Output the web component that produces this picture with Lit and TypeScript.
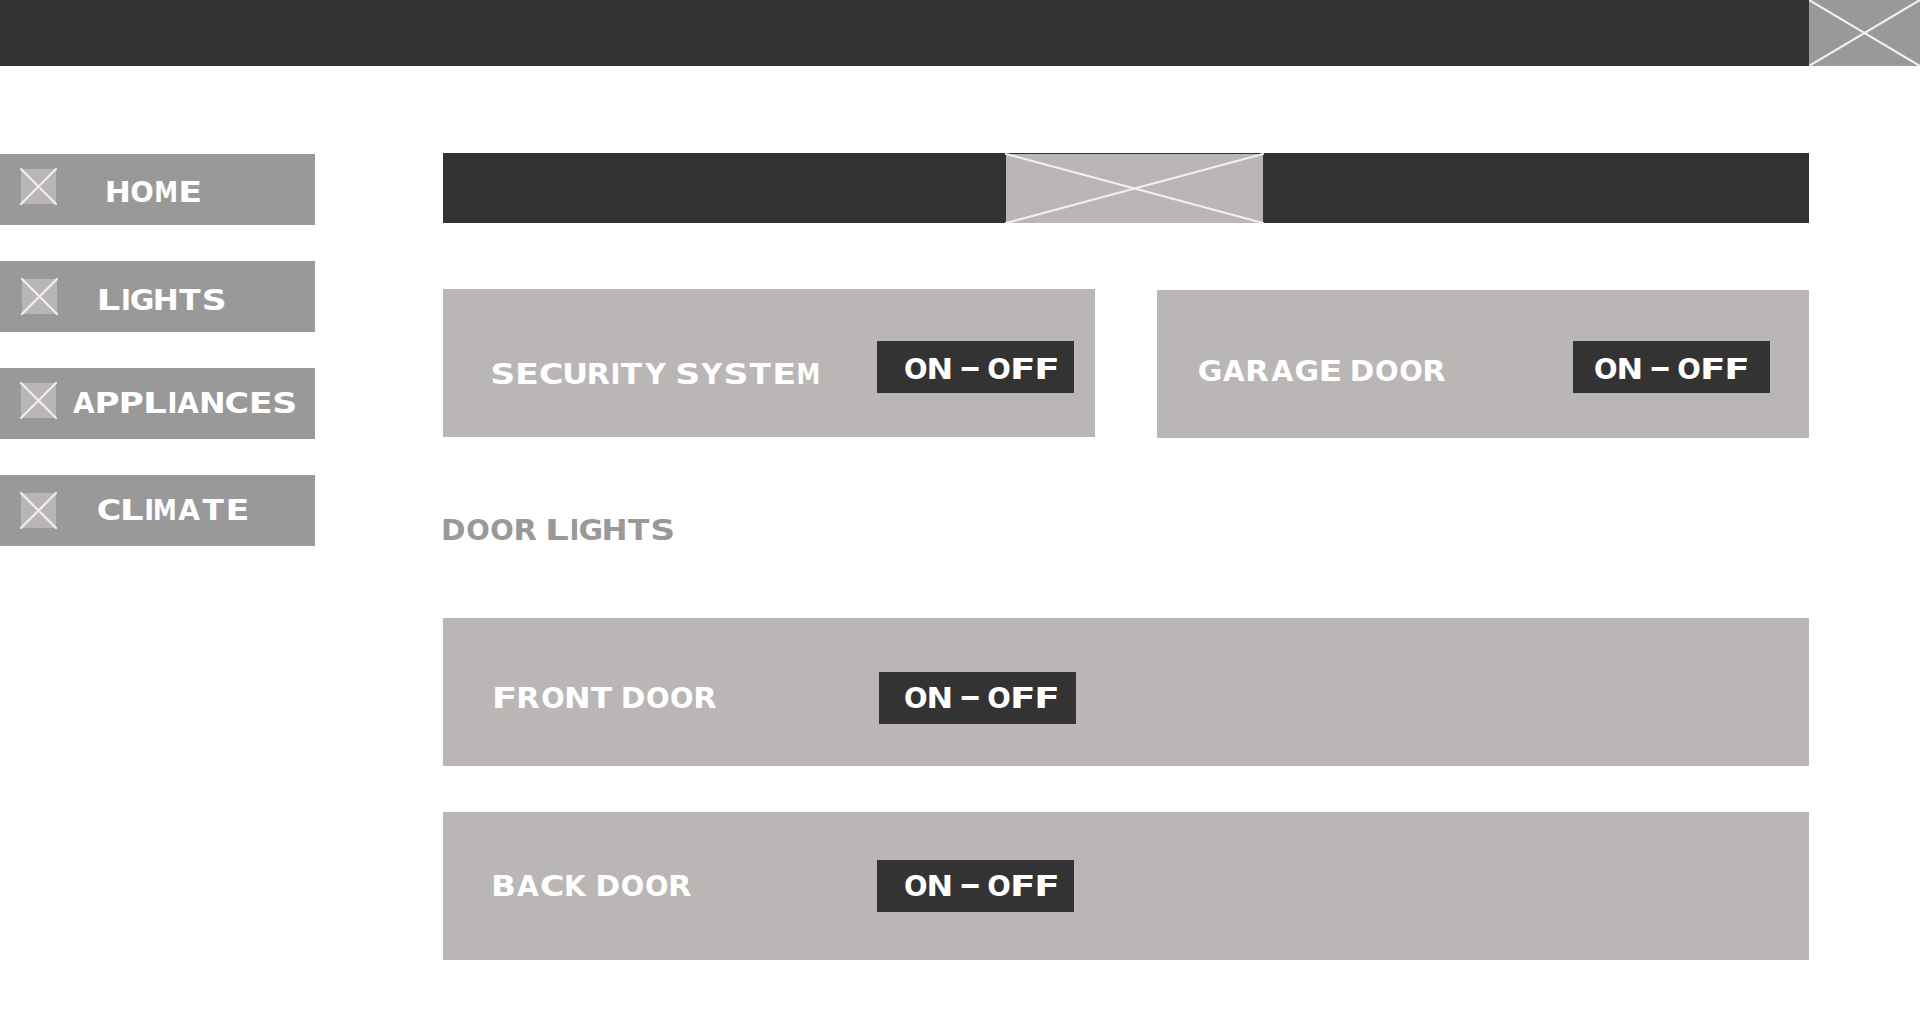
import { LitElement, html, svg, css } from "lit";
import { customElement, property } from "lit/decorators.js";

const CELL = 21;
const STEP = 24.15;
const SIZE = 28.8;

/* Per glyph, in em: advance width, ink width, ink centre minus advance centre. */
const METRICS: Record<string, [number, number, number]> = {
  A: [0.774, 0.75, 0],
  B: [0.762, 0.64, 0.012],
  C: [0.734, 0.631, -0.006],
  D: [0.83, 0.71, 0.018],
  E: [0.683, 0.6, 0],
  F: [0.683, 0.56, 0.01],
  G: [0.821, 0.7, -0.012],
  H: [0.837, 0.675, 0],
  I: [0.372, 0.188, 0],
  K: [0.775, 0.75, 0.05],
  L: [0.637, 0.56, 0.035],
  M: [0.995, 0.88, 0],
  N: [0.837, 0.66, 0],
  O: [0.85, 0.758, 0],
  P: [0.733, 0.615, 0.027],
  R: [0.77, 0.69, 0.035],
  S: [0.72, 0.605, 0],
  T: [0.682, 0.672, 0],
  U: [0.812, 0.65, 0],
  Y: [0.724, 0.74, 0],
  "-": [0.415, 0.31, 0],
};

@customElement("grid-label")
class GridLabel extends LitElement {
  @property() text = "";

  static styles = css`
    :host { display: block; flex: none; height: 21px; }
    .lettering { display: block; height: 21px; overflow: visible; }
    .run {
      font-family: "DejaVu Sans", "Liberation Sans", sans-serif;
      font-weight: 700;
      font-size: 28.8px;
      fill: currentColor;
      white-space: pre;
    }
  `;

  render() {
    let x = 0.3;
    let end = 0;
    const letters = [...this.text].map((ch) => {
      if (ch === " ") {
        const at = x;
        x += 8;
        return svg`<tspan x=${at.toFixed(2)} y="21"> </tspan>`;
      }
      const w = ch === "I" ? 5 : ch === "-" ? 17 : CELL;
      const [advance, ink, shift] = METRICS[ch];
      const scale = w / (ink * SIZE);
      const length = advance * SIZE * scale;
      const at = x + w / 2 - length / 2 - shift * SIZE * scale;
      end = x + w;
      x += ch === "I" ? 7.8 : ch === "-" ? 19 : STEP;
      return svg`<tspan x=${at.toFixed(2)} y=${ch === "-" ? "19" : "21"} textLength=${length.toFixed(2)} lengthAdjust="spacingAndGlyphs">${ch}</tspan>`;
    });
    return html`<svg class="lettering" width=${Math.floor(end)} height="21"><text class="run">${letters}</text></svg>`;
  }
}

@customElement("cross-box")
class CrossBox extends LitElement {
  static styles = css`
    :host { display: block; flex: none; background: #bab6b5; }
    .cross { display: block; width: 100%; height: 100%; overflow: visible; }
    .cross line { stroke: #f1f0ee; stroke-width: 2.2; stroke-linecap: round; }
  `;

  render() {
    return html`<svg class="cross">
      <line x1="0" y1="0" x2="100%" y2="100%"></line>
      <line x1="0" y1="100%" x2="100%" y2="0"></line>
    </svg>`;
  }
}

@customElement("app-root")
class AppRoot extends LitElement {
  static styles = css`
    :host { display: block; height: 1027px; background: #fff; color: #fff; overflow: hidden; }
    .topbar { display: flex; justify-content: flex-end; height: 66px; background: #333; }
    .account { width: 111px; background: #999; overflow: hidden; }
    .body { display: flex; align-items: flex-start; gap: 128px; padding-top: 87px; }
    .menu { display: flex; flex-direction: column; gap: 36px; width: 315px; padding-top: 1px; }
    .item { display: flex; align-items: flex-start; height: 71px; background: #999; box-sizing: border-box; padding-left: 21px; }
    .icon { width: 35px; height: 35px; margin-top: 15px; }
    .low { margin-top: 18px; }
    .lights { margin-left: 1px; }
    .t-home { margin: 27px 0 0 51px; }
    .t-lights { margin: 28px 0 0 42px; }
    .t-appliances { margin: 24px 0 0 17px; }
    .t-climate { margin: 24px 0 0 42px; }
    .main { width: 1366px; }
    .banner { display: flex; height: 70px; background: #333; }
    .picture { width: 257px; height: 69px; margin: 1px 0 0 563px; }
    .pair { display: flex; align-items: flex-start; justify-content: space-between; margin-top: 66px; }
    .card { display: flex; align-items: flex-start; justify-content: space-between; box-sizing: border-box; height: 148px; background: #bab6b5; }
    .half { width: 652px; }
    .security { padding: 52px 21px 0 49px; }
    .t-security { margin-top: 22px; }
    .garage { margin-top: 1px; padding: 51px 39px 0 42px; }
    .t-garage { margin-top: 19px; }
    .toggle { display: flex; flex: none; box-sizing: border-box; width: 197px; height: 52px; background: #333; padding: 17px 0 0 28px; }
    .g-toggle { padding-left: 22px; }
    .heading { color: #999; margin-top: 81px; }
    .front { margin-top: 78px; padding: 54px 733px 0 51px; }
    .front-toggle { padding: 15px 0 0 26px; }
    .t-front { margin-top: 15px; }
    .back { margin-top: 46px; padding: 48px 735px 0 50px; }
    .back-toggle { padding-top: 15px; }
    .t-back { margin-top: 15px; }
  `;

  render() {
    return html`
      <header class="topbar"><cross-box class="account"></cross-box></header>
      <div class="body">
        <nav class="menu">
          <div class="item"><cross-box class="icon"></cross-box><grid-label class="t-home" text="HOME"></grid-label></div>
          <div class="item"><cross-box class="icon low lights"></cross-box><grid-label class="t-lights" text="LIGHTS"></grid-label></div>
          <div class="item"><cross-box class="icon"></cross-box><grid-label class="t-appliances" text="APPLIANCES"></grid-label></div>
          <div class="item"><cross-box class="icon low"></cross-box><grid-label class="t-climate" text="CLIMATE"></grid-label></div>
        </nav>
        <main class="main">
          <div class="banner"><cross-box class="picture"></cross-box></div>
          <div class="pair">
            <section class="card half security">
              <grid-label class="t-security" text="SECURITY SYSTEM"></grid-label>
              <div class="toggle"><grid-label text="ON - OFF"></grid-label></div>
            </section>
            <section class="card half garage">
              <grid-label class="t-garage" text="GARAGE DOOR"></grid-label>
              <div class="toggle g-toggle"><grid-label text="ON - OFF"></grid-label></div>
            </section>
          </div>
          <grid-label class="heading" text="DOOR LIGHTS"></grid-label>
          <section class="card front">
            <grid-label class="t-front" text="FRONT DOOR"></grid-label>
            <div class="toggle front-toggle"><grid-label text="ON - OFF"></grid-label></div>
          </section>
          <section class="card back">
            <grid-label class="t-back" text="BACK DOOR"></grid-label>
            <div class="toggle back-toggle"><grid-label text="ON - OFF"></grid-label></div>
          </section>
        </main>
      </div>
    `;
  }
}
